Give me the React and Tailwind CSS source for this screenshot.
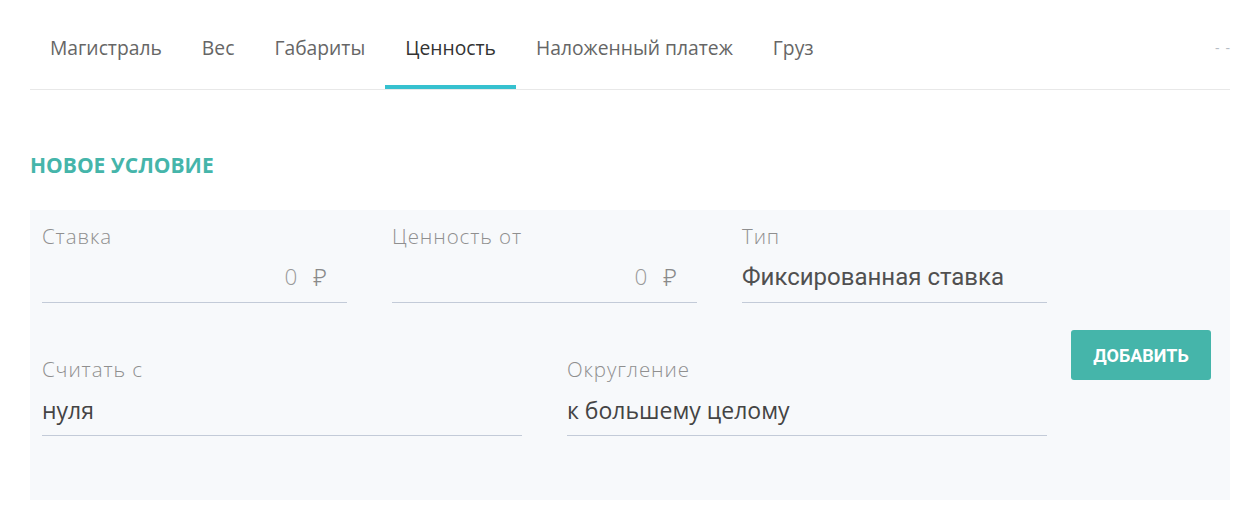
import React from "react";

const tabs = ["Магистраль", "Вес", "Габариты", "Ценность", "Наложенный платеж", "Груз"];

function Field({ label, value, width, align = "left", roboto = false, rub = false }) {
  return (
    <div className={`flex flex-col ${width}`}>
      <div className="h-[24px] text-[20.5px] leading-[24px] font-light tracking-[0.9px] text-[#8f8f8f] font-['Open_Sans',sans-serif]">
        {label}
      </div>
      <div
        className={`flex items-center h-[55px] pt-[4px] border-b border-[#c3cbd8] ${align === "right" ? "justify-end pr-[20px]" : ""}`}
      >
        {rub ? (
          <span className="flex items-center gap-[16px] text-[22.5px] font-light text-[#9a9a9a] font-['Open_Sans',sans-serif]">
            <span>0</span>
            <span className="font-['Noto_Sans',sans-serif] font-light text-[24px] leading-none text-[#8a8a8a]">₽</span>
          </span>
        ) : (
          <span
            className={`${roboto ? "text-[24px] font-['Roboto',sans-serif] text-[#505050]" : "text-[23px] font-['Open_Sans',sans-serif] text-[#444]"}`}
          >
            {value}
          </span>
        )}
      </div>
    </div>
  );
}

export default function App() {
  return (
    <div className="w-[1251px] h-[509px] bg-white font-['Open_Sans',sans-serif] overflow-hidden">
      <div className="pl-[30px] pr-[21px]">
        <div className="flex items-end h-[90px] border-b border-[#e8e8e8]">
          <div className="flex h-[63px]">
            {tabs.map((t) => {
              const active = t === "Ценность";
              return (
                <div
                  key={t}
                  className={`px-[20px] pt-[9px] text-[19.3px] leading-[26px] border-b-[4px] ${
                    active ? "border-[#36c1cf] text-[#333]" : "border-transparent text-[#666]"
                  }`}
                >
                  {t}
                </div>
              );
            })}
          </div>
          <div className="ml-auto self-start mt-[37px] mr-[0px] flex gap-[6px]">
            <span className="text-[14px] text-[#b5bcc4]">-</span>
            <span className="text-[14px] text-[#b5bcc4]">-</span>
          </div>
        </div>

        <div className="pt-[61px] text-[21px] leading-[28px] font-bold text-[#45b5aa] uppercase">Новое условие</div>

        <div className="mt-[31px] h-[290px] bg-[#f7f9fb] pl-[12px] pr-[19px] pt-[14px] flex">
          <div className="flex flex-col w-[1005px]">
            <div className="flex gap-[45px]">
              <Field label="Ставка" width="w-[305px]" align="right" rub />
              <Field label="Ценность от" width="w-[305px]" align="right" rub />
              <Field label="Тип" value="Фиксированная ставка" width="w-[305px]" roboto />
            </div>
            <div className="flex gap-[45px] mt-[54px]">
              <Field label="Считать с" value="нуля" width="w-[480px]" />
              <Field label="Округление" value="к большему целому" width="w-[480px]" />
            </div>
          </div>
          <div className="ml-auto pt-[106px]">
            <button className="w-[140px] h-[50px] rounded-[3px] bg-[#45b5aa] text-white font-['Roboto',sans-serif] font-bold text-[18px] uppercase">
              Добавить
            </button>
          </div>
        </div>
      </div>
    </div>
  );
}
